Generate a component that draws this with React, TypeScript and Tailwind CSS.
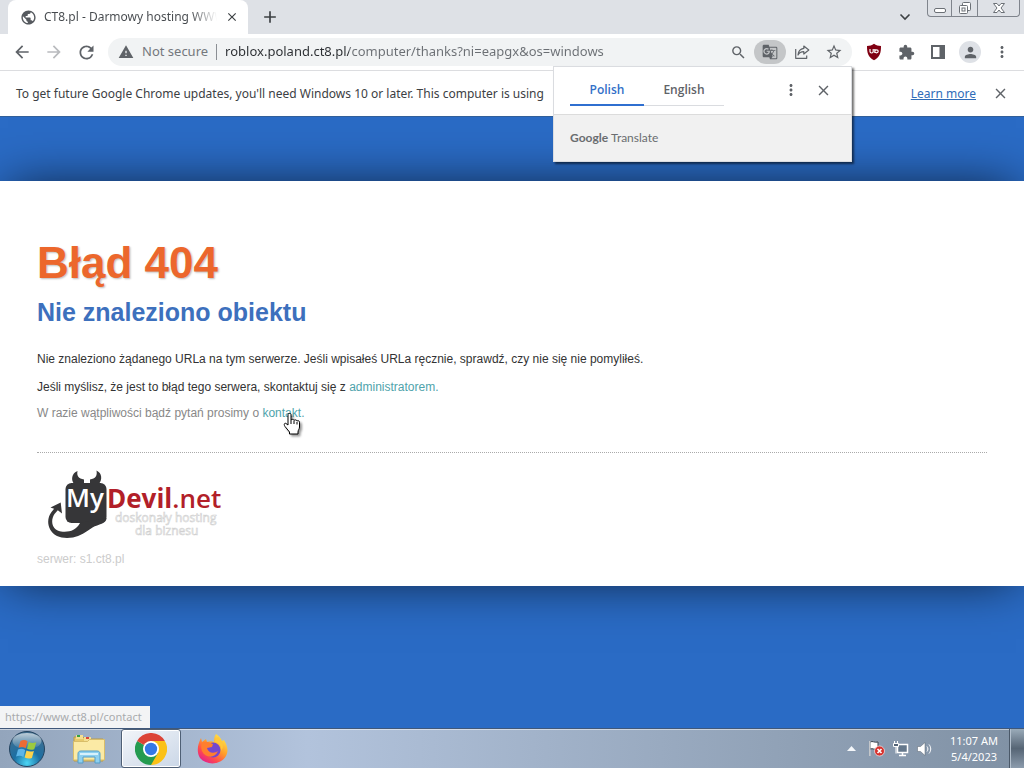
import type { ReactNode } from "react";
import {
  MdAdd,
  MdArrowBack,
  MdArrowForward,
  MdClose,
  MdExtension,
  MdGTranslate,
  MdMoreVert,
  MdPerson,
  MdPublic,
  MdRefresh,
  MdSearch,
  MdStarBorder,
  MdWarning,
} from "react-icons/md";

function IconButton({ label, children, className = "" }: { label: string; children: ReactNode; className?: string }) {
  return (
    <button
      type="button"
      aria-label={label}
      className={`flex h-6 w-8 shrink-0 items-center justify-center ${className || "text-[#5f6368]"}`}
    >
      {children}
    </button>
  );
}

function WindowControls() {
  return (
    <div className="flex h-[17px] rounded-b border border-t-0 border-[#7f848c] text-[#6b7076]">
      <button type="button" aria-label="Minimize" className="flex w-6 items-center justify-center border-r border-[#7f848c]">
        <svg width="14" height="14" viewBox="0 0 14 14" fill="#fff" stroke="currentColor">
          <rect x="1.5" y="7.5" width="11" height="4" rx="1.5" />
        </svg>
      </button>
      <button type="button" aria-label="Restore" className="flex w-[26px] items-center justify-center border-r border-[#7f848c]">
        <svg width="14" height="14" viewBox="0 0 14 14" fill="#fff" stroke="currentColor">
          <rect x="4.5" y="1.5" width="8" height="8" rx="1" />
          <rect x="1.5" y="4.5" width="8" height="8" rx="1" />
          <rect x="4" y="7" width="3" height="3" />
        </svg>
      </button>
      <button type="button" aria-label="Close window" className="flex w-[41px] items-center justify-center">
        <svg width="14" height="14" viewBox="0 0 14 14" fill="#fff" stroke="currentColor">
          <path d="M1.5 2.5h3.500l2 2.500 2-2.500h3.500L9 7l3.500 4.500H9L7 9l-2 2.500H1.500L5 7z" />
        </svg>
      </button>
    </div>
  );
}

function TabStrip() {
  return (
    <div className="flex h-[34px] shrink-0 bg-[#dee1e6] pl-2">
      <div className="flex w-60 items-center rounded-t-lg bg-white pl-3 text-[#3c4043]">
        <MdPublic size={17} className="shrink-0 text-[#55595e]" />
        <span className="ml-[7px] w-[173px] overflow-hidden bg-linear-to-r from-[#45494d] from-85% to-transparent bg-clip-text text-[12px] whitespace-nowrap text-transparent">
          CT8.pl - Darmowy hosting WWW
        </span>
        <button type="button" aria-label="Close tab" className="ml-2">
          <MdClose size={14} />
        </button>
      </div>
      <button type="button" aria-label="New tab" className="ml-3 flex items-center text-[#3c4043]">
        <MdAdd size={20} />
      </button>
      <div className="ml-auto flex gap-[15px] pr-1">
        <button type="button" aria-label="Search tabs" className="flex items-center text-[#3c4043]">
          <svg width="14" height="14" viewBox="0 0 14 14" fill="none" stroke="currentColor" strokeWidth="1.6">
            <path d="M2.500 4.500L7 9l4.500-4.500" />
          </svg>
        </button>
        <WindowControls />
      </div>
    </div>
  );
}

function TranslatePopup() {
  return (
    <section
      aria-label="Google Translate"
      className="absolute top-8 right-[172px] z-10 w-[299px] border border-[#dadce0] bg-white shadow-[2px_2px_2px_rgba(0,0,0,0.55)]"
    >
      <div className="flex h-12 items-start border-b border-[#dcdcdc] pl-4">
        <div role="tablist" className="flex font-['Open_Sans',sans-serif] text-[12px] font-semibold">
          <button type="button" role="tab" aria-selected="true" className="h-[39px] w-[74px] border-b-2 border-[#2f6fd0] pt-2 text-[#3270c8]">
            Polish
          </button>
          <button type="button" role="tab" aria-selected="false" className="h-[39px] w-20 border-b border-[#dadce0] pt-[7px] text-[#5f6368]">
            English
          </button>
        </div>
        <IconButton label="Translate options" className="mt-[11px] ml-[51px] text-[#5f6368]">
          <MdMoreVert size={18} />
        </IconButton>
        <IconButton label="Close translate" className="mt-[11px] text-[#5f6368]">
          <MdClose size={17} />
        </IconButton>
      </div>
      <p className="flex h-[46px] items-center gap-[3px] bg-[#f1f1f1] pl-4 font-['Lato',sans-serif] text-[12px] text-[#6a6d70]">
        <span className="font-bold">Google</span>
        <span>Translate</span>
      </p>
    </section>
  );
}

function Toolbar() {
  return (
    <div className="relative flex h-[37px] shrink-0 items-center gap-1.5 border-b border-[#dcdde0] bg-white px-1.5">
      <div className="flex">
        <IconButton label="Back"><MdArrowBack size={20} /></IconButton>
        <IconButton label="Forward" className="text-[#b9bbbe]"><MdArrowForward size={20} /></IconButton>
        <IconButton label="Reload"><MdRefresh size={21} /></IconButton>
      </div>
      <div className="flex h-7 min-w-0 flex-1 items-center rounded-full bg-[#f1f3f4] pr-0.5 pl-2.5 text-[13px]">
        <button type="button" className="flex shrink-0 items-center gap-2 text-[#74787d]">
          <MdWarning size={16} className="text-[#5f6368]" />
          Not secure
        </button>
        <span className="mx-2 h-4 w-px bg-[#8b8f94]" />
        <input
          aria-label="Address"
          readOnly
          value="roblox.poland.ct8.pl/computer/thanks?ni=eapgx&os=windows"
          className="min-w-0 flex-1 bg-linear-to-r from-[#2b2e32] from-[124px] to-[#6b6f74] to-[124px] bg-clip-text text-transparent outline-none"
        />
        <IconButton label="Zoom"><MdSearch size={17} /></IconButton>
        <IconButton label="Translate this page" className="rounded-full bg-[#c4c6c8] text-[#5f6368]"><MdGTranslate size={16} /></IconButton>
        <IconButton label="Share this page">
          <svg width="17" height="16" viewBox="0 0 17 16" fill="none" stroke="currentColor" strokeWidth="1.2" strokeLinejoin="round">
            <path d="M1.700 5v9.300h11V11.500M9.800 2l5 4-5 4V7.700C7 7.700 5.200 8.700 4 11c.3-3.800 2.300-6.100 5.800-6.600z" />
          </svg>
        </IconButton>
        <IconButton label="Bookmark this page"><MdStarBorder size={18} /></IconButton>
      </div>
      <div className="flex">
        <IconButton label="uBlock Origin">
          <svg width="16" height="18" viewBox="0 0 16 18">
            <path d="M8 .8c2 1.500 4.300 2.200 7 2.200 0 6.500-.8 11-7 14.200C1.800 14 1 9.500 1 3 3.700 3 6 2.300 8 .8z" fill="#800012" />
            <path d="M4 6v2.500c0 2 3.200 2 3.200 0V6M8.800 6v4M8.800 8.300c0-2 3.400-2 3.400 0s-3.400 2-3.400 0" fill="none" stroke="#fff" strokeWidth="1.2" />
          </svg>
        </IconButton>
        <IconButton label="Extensions"><MdExtension size={17} /></IconButton>
        <IconButton label="Side panel">
          <svg width="14" height="14" viewBox="0 0 14 14">
            <path fill="currentColor" d="M0 0h14v14H0zM2 2v10h6.500V2z" fillRule="evenodd" />
          </svg>
        </IconButton>
        <IconButton label="Profile">
          <span className="flex size-[22px] items-center justify-center rounded-full bg-[#dee1e6]"><MdPerson size={17} /></span>
        </IconButton>
        <IconButton label="Menu"><MdMoreVert size={18} /></IconButton>
      </div>
      <TranslatePopup />
    </div>
  );
}

function InfoBar() {
  return (
    <div className="flex h-[45px] shrink-0 items-center bg-white pr-2 pl-4 text-[12px] text-[#3c4043]">
      <p className="whitespace-nowrap">
        To get future Google Chrome updates, you'll need Windows 10 or later. This computer is using
      </p>
      <a href="#learn-more" className="ml-auto text-[#2f6cb8] underline">Learn more</a>
      <IconButton label="Dismiss" className="ml-2 text-[#5f6368]"><MdClose size={17} /></IconButton>
    </div>
  );
}

function MyDevilLogo() {
  return (
    <svg width="190" height="72" viewBox="0 0 190 72" role="img" aria-label="MyDevil.net" className="font-['Open_Sans']">
      <g fill="#363638">
        <rect x="28.5" y="14" width="41" height="40" rx="6" />
        <path d="M38 16c-5-5-3-12 2.500-14-1 5 1 7.500 6.500 8.500V16zM61 16c5-5 4-12-1.500-14.500 1 5.500-1 8-6.500 9V16z" />
        <path d="M69.500 49c0 6-8 6-14 9.500C49 63 43 67 36 68.500c-6 1-12 .5-16-1.500C10 62 9 50 14.500 43l4-5 2.500 3-3.500 4C13 52 15 61 24 62.500c8 1 15-1 19-8.500z" />
        <path d="M23.700 33.500L25 44.500 20.500 41l-7-2.500z" />
      </g>
      <text x="29" y="38" fill="#fff" fontSize="26" fontWeight="600">My</text>
      <text x="70" y="39" fill="#b21f29" fontSize="26">
        <tspan fontWeight="700">Devil</tspan><tspan fontWeight="600">.net</tspan>
      </text>
      <g fill="#fff" stroke="#d0d0d0" strokeWidth="0.6" fontSize="12">
        <text x="78" y="53">doskonały hosting</text>
        <text x="98" y="66">dla biznesu</text>
      </g>
    </svg>
  );
}

function HandCursor() {
  return (
    <svg width="22" height="26" viewBox="0 0 22 26" aria-hidden="true" className="absolute top-1.5 left-5 z-10 drop-shadow-[2px_2px_1px_rgba(0,0,0,0.4)]">
      <path
        d="M6 2.500c0-1.500 3-1.500 3 0V8c.5-1 3-.8 3 .5.5-1 3-.8 3 .7.5-1 2.500-.6 2.500 1V15c0 2-1.500 3-1.500 5v2H7.500v-2L3 14.500c-1.500-2-.5-4 1-3L6 13z"
        fill="#fff" stroke="#000" strokeLinejoin="round"
      />
      <path d="M9 8v4M12 9v3M15 10v2.500" stroke="#000" />
    </svg>
  );
}

function ErrorPage() {
  return (
    <main className="relative min-h-0 flex-1 overflow-hidden border-t border-[#315f99] bg-[#2a6bc5] pt-16 font-['Liberation_Sans',sans-serif]">
      <article className="bg-white px-[37px] pt-14 pb-[19px] text-[12px] leading-4 text-[#333] shadow-[0_0_50px_-8px_rgba(0,0,0,0.8)]">
        <h1 className="text-[44px] leading-[52px] font-bold text-[#ec672c] [text-shadow:1px_1px_2px_#bbb]">Błąd 404</h1>
        <h2 className="mt-[7px] text-[25px] leading-8 font-bold text-[#3d70bd]">Nie znaleziono obiektu</h2>
        <p className="mt-[23px]">
          Nie znaleziono żądanego URLa na tym serwerze. Jeśli wpisałeś URLa ręcznie, sprawdź, czy nie się nie pomyliłeś.
        </p>
        <p className="mt-3">
          Jeśli myślisz, że jest to błąd tego serwera, skontaktuj się z{" "}
          <a href="#admin" className="text-[#4fa3ab]">administratorem.</a>
        </p>
        <p className="mt-2.5 text-[#888]">
          W razie wątpliwości bądź pytań prosimy o{" "}
          <a href="https://www.ct8.pl/contact" className="relative text-[#4fa3ab]">kontakt.<HandCursor /></a>
        </p>
        <hr className="mt-[31px] border-t border-dotted border-[#aaa]" />
        <footer className="pt-4 text-[#ccc]">
          <MyDevilLogo />
          <p className="mt-2.5">serwer: s1.ct8.pl</p>
        </footer>
      </article>
      <div className="absolute bottom-0 left-0 flex h-[22px] items-center bg-[#f3f4f5] pr-2 pl-[5px] font-['Noto_Sans',sans-serif] text-[11px] text-[#a9abad]">
        https://www.ct8.pl/contact
      </div>
    </main>
  );
}

function StartOrb() {
  return (
    <svg width="38" height="38" viewBox="0 0 38 38">
      <defs>
        <radialGradient id="orb" cx="50%" cy="90%" r="85%">
          <stop offset="0" stopColor="#4bd6f5" />
          <stop offset="0.45" stopColor="#1c6fa3" />
          <stop offset="1" stopColor="#416f90" />
        </radialGradient>
        <linearGradient id="shine" x2="0" y2="1">
          <stop stopColor="#fff" stopOpacity="0.65" />
          <stop offset="1" stopColor="#fff" stopOpacity="0.05" />
        </linearGradient>
      </defs>
      <circle cx="19" cy="19" r="17.5" fill="url(#orb)" stroke="#24435f" />
      <ellipse cx="19" cy="11" rx="14.5" ry="8" fill="url(#shine)" />
      <path d="M12.500 11c3-1.500 4.800-1 7 .2l-1.800 7c-2.500-1.300-4.500-1.500-7.200-.4z" fill="#ee6b34" />
      <path d="M20.800 12c2.500 1.200 4.700 1.300 7.500.2l-2 7c-2.500 1-4.700.9-7.300-.4z" fill="#9bca3f" />
      <path d="M10 19.500c2.700-1.200 4.700-.9 7.200.4l-1.800 7c-2.500-1.400-4.600-1.500-7.300-.4z" fill="#5db5e8" />
      <path d="M18.500 20.500c2.600 1.300 4.900 1.400 7.400.4l-2 7c-2.500 1-4.700.8-7.300-.5z" fill="#fdd24b" />
    </svg>
  );
}

function ExplorerIcon() {
  return (
    <svg width="34" height="30" viewBox="0 0 34 30">
      <path d="M2 3h9l2 2h18v22H2z" fill="#e8c96b" stroke="#b99a47" />
      <path d="M4 1h7v4H4z" fill="#f4df92" />
      <path d="M12 3h7v4h-7z" fill="#f4df92" />
      <path d="M20 5h9v3h-9z" fill="#f9f3d5" />
      <path d="M5 1h3v2H5z" fill="#35a045" />
      <path d="M14 3h3v2h-3z" fill="#d9453a" />
      <path d="M21 5h3v2h-3z" fill="#3b8bd8" />
      <path d="M1.500 7.500h14l2-2h15V26h-31z" fill="#fbeaa5" stroke="#d8bd69" />
      <path d="M6 29V20c0-2 1-3 3-3h16c2 0 3 1 3 3v9h-5v-6H11v6z" fill="#8ed0ef" stroke="#559dc8" />
      <path d="M8 20h18" stroke="#d7f1fc" strokeWidth="2" />
    </svg>
  );
}

function ChromeIcon() {
  return (
    <svg width="32" height="32" viewBox="0 0 48 48">
      <path d="M24 24V12h20.800A24 24 0 0 1 24 48z" fill="#fbc116" />
      <path d="M24 24l10.400 6L24 48A24 24 0 0 1 3.200 12z" fill="#249b50" />
      <path d="M13.600 18L3.200 12A24 24 0 0 1 44.800 12H24z" fill="#dc4437" />
      <circle cx="24" cy="24" r="12" fill="#fff" />
      <circle cx="24" cy="24" r="9.3" fill="#3478e5" />
    </svg>
  );
}

function FirefoxIcon() {
  return (
    <svg width="32" height="32" viewBox="0 0 32 32">
      <defs>
        <linearGradient id="fox" x1="0.85" y1="0.05" x2="0.2" y2="0.95">
          <stop stopColor="#ffe94a" />
          <stop offset="0.45" stopColor="#ff9a2a" />
          <stop offset="0.75" stopColor="#ff4a4f" />
          <stop offset="1" stopColor="#e3228b" />
        </linearGradient>
      </defs>
      <path d="M19 1c3 2 5 4 6 7l2-1c3 5 5 10 2 16-5 9-19 10-26 2C-1 18 1 11 4 5l1 4 4-3 1 3c3-1 5-1 7 0 0-3 0-5 2-8z" fill="url(#fox)" />
      <circle cx="16" cy="17" r="7.5" fill="#7547ce" />
      <path d="M5 10c4-3 9 0 11 1l-1 3-5 1c1 5 7 6 11 3-3 8-13 7-16 0-1-3-1-5 0-8z" fill="#ff7e2e" />
      <path d="M17 9c5 0 8 4 7 9 4-4 1-11-3-14z" fill="#ffc83a" />
    </svg>
  );
}

function TrayIcons() {
  return (
    <div className="flex items-center gap-2">
      <button type="button" aria-label="Show hidden icons" className="mr-1">
        <svg width="9" height="5" viewBox="0 0 9 5"><path d="M4.500 0L9 5H0z" fill="#f4f7fa" /></svg>
      </button>
      <button type="button" aria-label="Action Center">
        <svg width="17" height="17" viewBox="0 0 17 17">
          <path d="M1.500 1v15M2 2c3-1.500 4 1 8 0v7c-4 1-5-1-8 0z" fill="#fff" stroke="#39434e" />
          <path d="M1.800 1v15" stroke="#fff" />
          <circle cx="11.5" cy="11" r="5" fill="#d6322e" stroke="#fff" strokeWidth="0.6" />
          <path d="M9.500 9l4 4M13.500 9l-4 4" stroke="#fff" strokeWidth="1.6" />
        </svg>
      </button>
      <button type="button" aria-label="Network">
        <svg width="16" height="16" viewBox="0 0 16 16" fill="none">
          <rect x="4.5" y="3.5" width="10" height="8" fill="#65788c" stroke="#fff" strokeWidth="1.5" />
          <path d="M9.500 12v2M6 14.500h7" stroke="#fff" strokeWidth="1.5" />
          <path d="M.5 2.500h5v3h-5zM3 5.500v7M1.500 0v3M4.500 0v3" fill="#536478" stroke="#fff" />
        </svg>
      </button>
      <button type="button" aria-label="Volume">
        <svg width="16" height="16" viewBox="0 0 16 16" fill="none">
          <path d="M.5 5.500h3L8 1.500v13l-4.500-4h-3z" fill="#fff" stroke="#56616d" strokeWidth="0.5" />
          <path d="M10 5.500c1.200 1.500 1.200 3.500 0 5M12 3.500c2.300 2.800 2.300 6.200 0 9" stroke="#fff" />
        </svg>
      </button>
    </div>
  );
}

function Taskbar() {
  return (
    <footer className="flex h-10 shrink-0 items-stretch border-t border-[#40587a] bg-linear-to-r from-[#93a5bc] via-[#b2c3dc] via-30% to-[#8091a4] shadow-[inset_0_1px_0_rgba(255,255,255,0.5)]">
      <button type="button" aria-label="Start" className="flex w-[54px] items-center justify-center"><StartOrb /></button>
      <button type="button" aria-label="Windows Explorer" className="ml-[5px] flex w-[60px] items-center justify-center"><ExplorerIcon /></button>
      <button type="button" aria-label="Google Chrome" className="ml-0.5 flex w-[60px] items-center justify-center rounded-[3px] border border-[#4e5f75] bg-linear-to-br from-[#f2f5f9] to-[#cbd7e7] shadow-[inset_0_0_0_1px_#fff]">
        <ChromeIcon />
      </button>
      <button type="button" aria-label="Firefox" className="ml-0.5 flex w-[60px] items-center justify-center"><FirefoxIcon /></button>
      <div className="ml-auto flex items-center">
        <TrayIcons />
        <time className="ml-[17px] text-center text-[11px] leading-4 text-white">
          <span className="block">11:07 AM</span>
          <span className="block">5/4/2023</span>
        </time>
        <button type="button" aria-label="Show desktop" className="ml-[11px] h-full w-[15px] border-l border-[#4a5868] bg-linear-to-b from-[#9aabb9] via-[#566575] to-[#8c9cad] shadow-[inset_1px_0_0_#b3c0cd]" />
      </div>
    </footer>
  );
}

export default function App() {
  return (
    <div className="flex h-screen flex-col overflow-hidden font-['Noto_Sans',sans-serif]">
      <TabStrip />
      <Toolbar />
      <InfoBar />
      <ErrorPage />
      <Taskbar />
    </div>
  );
}
